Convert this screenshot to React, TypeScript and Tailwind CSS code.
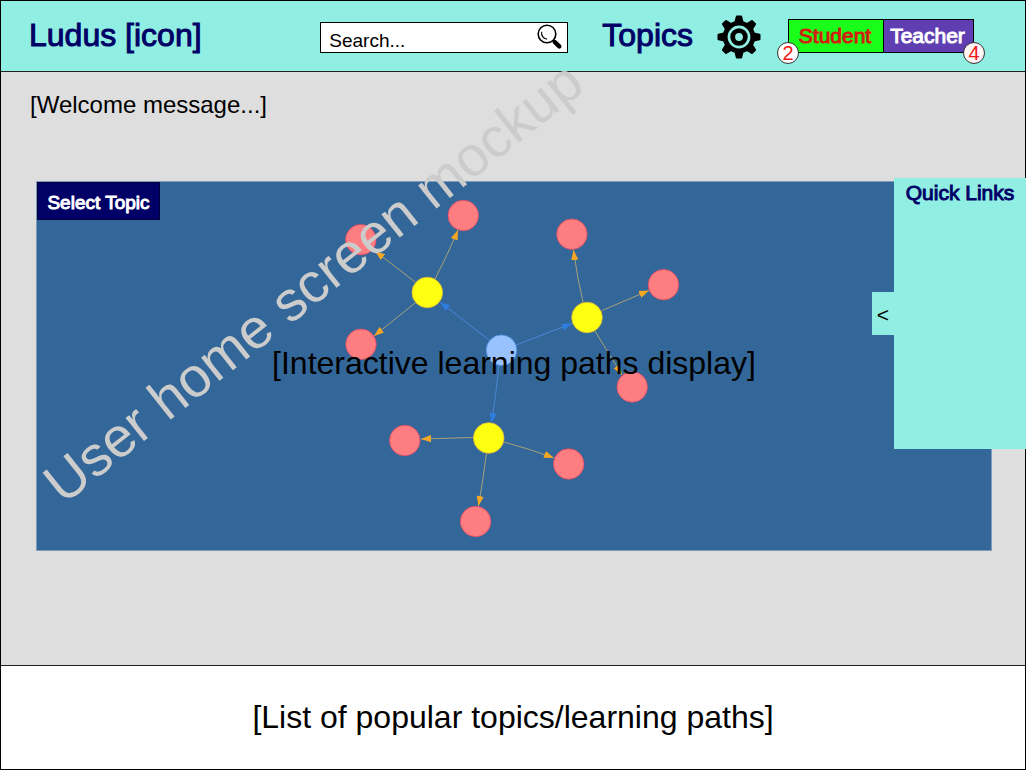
import React from "react";

type Point = [number, number];

const topics: Point[] = [
  [427.3, 292.5],
  [587, 317.5],
  [488.7, 438],
];

const lessons: Point[] = [
  [360.8, 239.7],
  [463.3, 215.5],
  [361, 344.3],
  [571.9, 234.2],
  [663.5, 284.7],
  [632.2, 387],
  [404.8, 440.5],
  [568.7, 464],
  [475.6, 521.5],
];

const topicEdges = [
  "M489 340 L440 302",
  "M516 345 L572 323.5",
  "M499 365 Q496 395 491.5 423",
];

const lessonEdges = [
  "M415 282 L375 251",
  "M435 279 Q448 254 458 230",
  "M415 303 L374 336",
  "M583 302 Q577 277 573.5 250",
  "M602 310.5 L649 290.5",
  "M595 331 L622 375",
  "M473 437.5 L421 439",
  "M504 442 Q530 449 554 458",
  "M486.5 453 Q483 480 478.5 506",
];

const gearAngles = [0, 45, 90, 135, 180, 225, 270, 315];

function PathsGraph() {
  return (
    <svg
      className="absolute inset-0 h-full w-full"
      viewBox="37 182 954 368"
      aria-hidden="true"
    >
      <defs>
        <marker id="arrow-blue" markerUnits="userSpaceOnUse" markerWidth="11" markerHeight="8" refX="10" refY="4" orient="auto">
          <path d="M0 0.4 L10 4 L0 7.6 Z" fill="#2f7de1" />
        </marker>
        <marker id="arrow-orange" markerUnits="userSpaceOnUse" markerWidth="11" markerHeight="8" refX="10" refY="4" orient="auto">
          <path d="M0 0.4 L10 4 L0 7.6 Z" fill="#f5a623" />
        </marker>
      </defs>
      {topicEdges.map((d) => (
        <path key={d} d={d} fill="none" stroke="#4a86d8" strokeWidth="1" markerEnd="url(#arrow-blue)" />
      ))}
      {lessonEdges.map((d) => (
        <path key={d} d={d} fill="none" stroke="#a89f78" strokeWidth="1" markerEnd="url(#arrow-orange)" />
      ))}
      {lessons.map(([x, y]) => (
        <circle key={`${x}-${y}`} cx={x} cy={y} r="15.3" fill="#fd7d81" stroke="#d84a62" strokeWidth="0.8" />
      ))}
      {topics.map(([x, y]) => (
        <circle key={`${x}-${y}`} cx={x} cy={y} r="15.3" fill="#ffff12" stroke="#e0b93a" strokeWidth="0.8" />
      ))}
      <circle cx="501.5" cy="350.2" r="15.3" fill="#98c2fd" stroke="#4f8fe6" strokeWidth="0.8" />
    </svg>
  );
}

function GearIcon() {
  return (
    <svg className="block size-11" viewBox="-22 -22 44 44" aria-hidden="true">
      {gearAngles.map((a) => (
        <path key={a} d="M-4.8 -14 L-3.2 -20.6 Q-3 -21.5 -2.2 -21.5 H2.2 Q3 -21.5 3.2 -20.6 L4.8 -14 Z" transform={`rotate(${a})`} />
      ))}
      <circle r="13.8" fill="none" stroke="#000" strokeWidth="4.8" />
      <circle r="6.3" fill="none" stroke="#000" strokeWidth="4.8" />
    </svg>
  );
}

function SearchIcon() {
  return (
    <svg className="block size-7" viewBox="0 0 28 28" fill="none" stroke="#000" aria-hidden="true">
      <circle cx="12" cy="10" r="8.8" strokeWidth="1.6" />
      <path d="M6.6 7.8 Q6 13.8 12 15.2" strokeWidth="1.1" />
      <path d="M17.6 16.3 L19.8 18.2" strokeWidth="2" />
      <path d="M19.8 18.2 L24.3 22.4" strokeWidth="4.4" strokeLinecap="round" />
    </svg>
  );
}

export default function App() {
  return (
    <div className="relative flex min-h-screen flex-col border border-black bg-[#dedede] font-['Liberation_Sans',Arial,sans-serif] text-black">
      <header className="relative flex h-[71px] items-center border-b border-[#222] bg-[#90efe2] pr-[51px] pl-7 text-[#006]">
        <h1 className="pb-0.5 text-[32px] leading-9 [-webkit-text-stroke:1px_#006]">Ludus [icon]</h1>
        <form className="mt-0.5 ml-auto flex h-[31px] w-[248px] items-end border border-black bg-white pl-2 text-black" onSubmit={(e) => e.preventDefault()}>
          <input
            type="text"
            aria-label="Search"
            placeholder="Search..."
            className="h-6 min-w-0 flex-1 bg-transparent pt-0.5 text-[19px] leading-6 outline-none placeholder:text-black placeholder:opacity-100"
          />
          <button type="submit" aria-label="Search" className="mr-1">
            <SearchIcon />
          </button>
        </form>
        <a href="#topics" className="ml-[34px] pb-0.5 text-[32px] leading-9 [-webkit-text-stroke:1px_#006]">
          Topics
        </a>
        <button type="button" aria-label="Settings" className="mt-0.5 ml-6 text-black">
          <GearIcon />
        </button>
        <div className="ml-[27px] flex h-[34px] text-[21px] leading-8">
          <button type="button" className="relative w-24 border border-black bg-[#1aff1a] pr-0.5 text-[#d02010] [-webkit-text-stroke:1px_#d02010]">
            Student
            <span className="absolute -bottom-3 -left-3 size-[22px] rounded-full border border-[#333] bg-white text-center text-xl leading-5 text-[#f01818] [-webkit-text-stroke:0px]">
              2
            </span>
          </button>
          <button type="button" className="relative -ml-px w-[91px] border border-black bg-[#5e3eb0] pr-0.5 text-white [-webkit-text-stroke:1px_#fff]">
            Teacher
            <span className="absolute -right-3 -bottom-3 size-[22px] rounded-full border border-[#333] bg-[#fff4f6] text-center text-xl leading-5 text-[#f01818] [-webkit-text-stroke:0px]">
              4
            </span>
          </button>
        </div>
      </header>

      <main className="relative flex flex-1 flex-col pt-[17px] pr-[33px] pl-[35px]">
        <p className="-ml-1.5 text-2xl leading-8">[Welcome message...]</p>

        <section className="relative mt-[60px] grid h-[370px] place-items-center border border-[#7f9dbb] bg-[#336799]">
          <PathsGraph />
          <button type="button" className="absolute top-0 left-0 h-[38px] w-[123px] border border-[#00003c] bg-[#006] pt-1 text-[19px] leading-6 text-white [-webkit-text-stroke:1px_#fff]">
            Select Topic
          </button>
          <p className="relative z-20 pb-1.5 text-[32px] leading-9">[Interactive learning paths display]</p>
        </section>

        <div className="pointer-events-none absolute top-[382px] left-[69px] origin-bottom-left -rotate-[38.5deg] text-[56px] leading-[60px] whitespace-nowrap text-[#ccc]">
          User home screen mockup
        </div>

        <aside className="absolute top-[106px] -right-px z-20 h-[271px] w-[132px] bg-[#90efe2]">
          <h2 className="pt-px text-center text-[21px] leading-7 text-[#006] [-webkit-text-stroke:1px_#006]">Quick Links</h2>
          <button type="button" aria-label="Expand quick links" className="absolute top-[114px] -left-[22px] h-[43px] w-[22px] bg-[#90efe2] pt-0.5 text-[21px]">
            &lt;
          </button>
        </aside>
      </main>

      <footer className="flex h-[104px] items-center justify-center border-t border-[#222] bg-white">
        <h2 className="pb-0.5 text-[32px] leading-9">[List of popular topics/learning paths]</h2>
      </footer>
    </div>
  );
}
